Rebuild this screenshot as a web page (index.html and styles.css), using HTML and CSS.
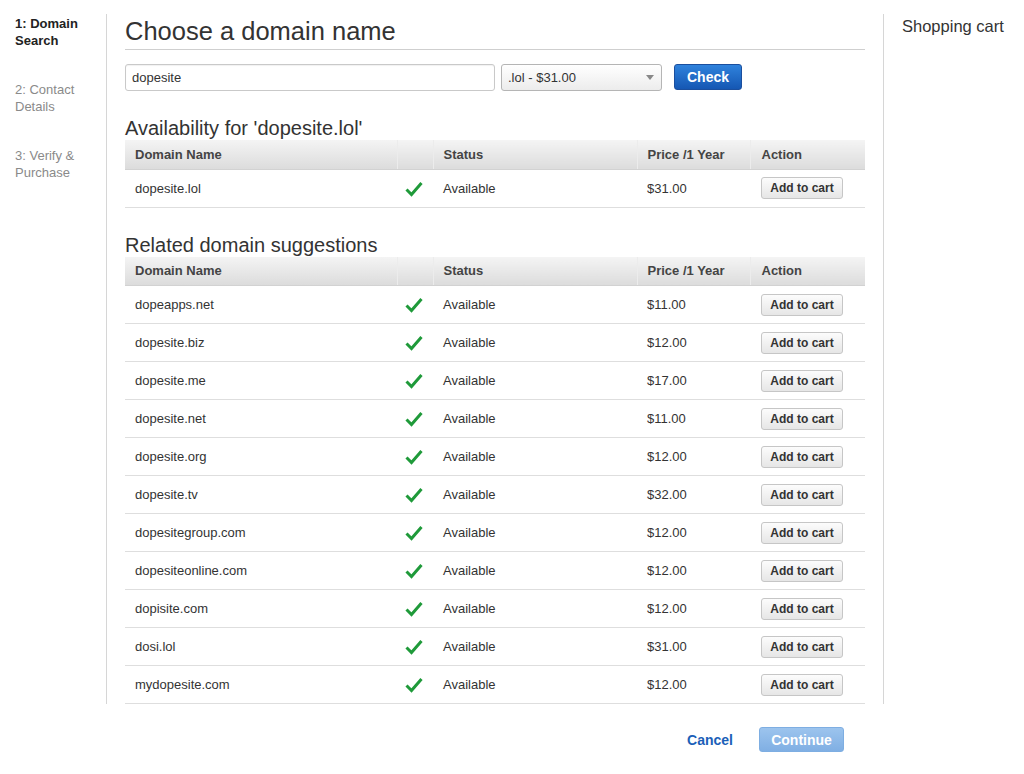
FILE: index.html
```html
<!DOCTYPE html>
<html>
<head>
<meta charset="utf-8">
<link rel="stylesheet" href="styles.css">
</head>
<body>
<div class="layout">
  <nav class="steps">
    <div class="step active">1: Domain Search</div>
    <div class="step">2: Contact Details</div>
    <div class="step">3: Verify &amp; Purchase</div>
  </nav>
  <main class="main">
    <h1 class="title">Choose a domain name</h1>
    <div class="search">
      <div class="input">dopesite</div>
      <div class="select"><span>.lol - $31.00</span><span class="caret"></span></div>
      <button class="btn-check">Check</button>
    </div>

    <h2 class="section">Availability for 'dopesite.lol'</h2>
    <table class="grid">
      <colgroup><col class="c1"><col class="c2"><col class="c3"><col class="c4"><col class="c5"></colgroup>
      <thead><tr><th>Domain Name</th><th></th><th>Status</th><th>Price /1 Year</th><th>Action</th></tr></thead>
      <tbody>
        <tr><td>dopesite.lol</td><td class="ok"><svg width="18" height="16" viewBox="0 0 18 16"><path d="M1.5 8.5 L6.5 13.5 L16.5 2" fill="none" stroke="#1f9a3a" stroke-width="3"/></svg></td><td>Available</td><td>$31.00</td><td class="act"><button class="add">Add to cart</button></td></tr>
      </tbody>
    </table>

    <h2 class="section">Related domain suggestions</h2>
    <table class="grid">
      <colgroup><col class="c1"><col class="c2"><col class="c3"><col class="c4"><col class="c5"></colgroup>
      <thead><tr><th>Domain Name</th><th></th><th>Status</th><th>Price /1 Year</th><th>Action</th></tr></thead>
      <tbody>
        <tr><td>dopeapps.net</td><td class="ok"><svg width="18" height="16" viewBox="0 0 18 16"><path d="M1.5 8.5 L6.5 13.5 L16.5 2" fill="none" stroke="#1f9a3a" stroke-width="3"/></svg></td><td>Available</td><td>$11.00</td><td class="act"><button class="add">Add to cart</button></td></tr>
        <tr><td>dopesite.biz</td><td class="ok"><svg width="18" height="16" viewBox="0 0 18 16"><path d="M1.5 8.5 L6.5 13.5 L16.5 2" fill="none" stroke="#1f9a3a" stroke-width="3"/></svg></td><td>Available</td><td>$12.00</td><td class="act"><button class="add">Add to cart</button></td></tr>
        <tr><td>dopesite.me</td><td class="ok"><svg width="18" height="16" viewBox="0 0 18 16"><path d="M1.5 8.5 L6.5 13.5 L16.5 2" fill="none" stroke="#1f9a3a" stroke-width="3"/></svg></td><td>Available</td><td>$17.00</td><td class="act"><button class="add">Add to cart</button></td></tr>
        <tr><td>dopesite.net</td><td class="ok"><svg width="18" height="16" viewBox="0 0 18 16"><path d="M1.5 8.5 L6.5 13.5 L16.5 2" fill="none" stroke="#1f9a3a" stroke-width="3"/></svg></td><td>Available</td><td>$11.00</td><td class="act"><button class="add">Add to cart</button></td></tr>
        <tr><td>dopesite.org</td><td class="ok"><svg width="18" height="16" viewBox="0 0 18 16"><path d="M1.5 8.5 L6.5 13.5 L16.5 2" fill="none" stroke="#1f9a3a" stroke-width="3"/></svg></td><td>Available</td><td>$12.00</td><td class="act"><button class="add">Add to cart</button></td></tr>
        <tr><td>dopesite.tv</td><td class="ok"><svg width="18" height="16" viewBox="0 0 18 16"><path d="M1.5 8.5 L6.5 13.5 L16.5 2" fill="none" stroke="#1f9a3a" stroke-width="3"/></svg></td><td>Available</td><td>$32.00</td><td class="act"><button class="add">Add to cart</button></td></tr>
        <tr><td>dopesitegroup.com</td><td class="ok"><svg width="18" height="16" viewBox="0 0 18 16"><path d="M1.5 8.5 L6.5 13.5 L16.5 2" fill="none" stroke="#1f9a3a" stroke-width="3"/></svg></td><td>Available</td><td>$12.00</td><td class="act"><button class="add">Add to cart</button></td></tr>
        <tr><td>dopesiteonline.com</td><td class="ok"><svg width="18" height="16" viewBox="0 0 18 16"><path d="M1.5 8.5 L6.5 13.5 L16.5 2" fill="none" stroke="#1f9a3a" stroke-width="3"/></svg></td><td>Available</td><td>$12.00</td><td class="act"><button class="add">Add to cart</button></td></tr>
        <tr><td>dopisite.com</td><td class="ok"><svg width="18" height="16" viewBox="0 0 18 16"><path d="M1.5 8.5 L6.5 13.5 L16.5 2" fill="none" stroke="#1f9a3a" stroke-width="3"/></svg></td><td>Available</td><td>$12.00</td><td class="act"><button class="add">Add to cart</button></td></tr>
        <tr><td>dosi.lol</td><td class="ok"><svg width="18" height="16" viewBox="0 0 18 16"><path d="M1.5 8.5 L6.5 13.5 L16.5 2" fill="none" stroke="#1f9a3a" stroke-width="3"/></svg></td><td>Available</td><td>$31.00</td><td class="act"><button class="add">Add to cart</button></td></tr>
        <tr><td>mydopesite.com</td><td class="ok"><svg width="18" height="16" viewBox="0 0 18 16"><path d="M1.5 8.5 L6.5 13.5 L16.5 2" fill="none" stroke="#1f9a3a" stroke-width="3"/></svg></td><td>Available</td><td>$12.00</td><td class="act"><button class="add">Add to cart</button></td></tr>
      </tbody>
    </table>
  </main>
  <aside class="cart">Shopping cart</aside>
</div>
<div class="footer">
  <a class="cancel">Cancel</a>
  <button class="btn-continue">Continue</button>
</div>
</body>
</html>
```

FILE: styles.css
```css
* { box-sizing: border-box; }
body {
  margin: 0;
  background: #fff;
  font-family: "Liberation Sans", Arial, Helvetica, sans-serif;
  color: #333;
  width: 1024px;
}
.layout {
  display: flex;
  align-items: stretch;
  margin-top: 14px;
}
.steps {
  width: 107px;
  border-right: 1px solid #d6d6d6;
  padding: 1px 0 0 15px;
  flex: none;
}
.step {
  font-size: 13px;
  line-height: 17px;
  color: #8a8a8a;
  width: 80px;
  margin-bottom: 32px;
}
.step.active { color: #222; font-weight: bold; }
.main {
  width: 776px;
  padding: 0 18px;
  flex: none;
}
.title {
  margin: 0;
  font-size: 25.5px;
  line-height: 30px;
  font-weight: normal;
  color: #333;
  padding: 2px 0 3px;
  border-bottom: 1px solid #cfcfcf;
}
.search {
  display: flex;
  align-items: flex-start;
  margin-top: 14px;
}
.input {
  width: 370px;
  height: 27px;
  border: 1px solid #c9c9c9;
  border-radius: 3px;
  padding: 0 6px;
  font-size: 13px;
  line-height: 25px;
  color: #333;
  box-shadow: inset 0 1px 1px rgba(0,0,0,0.06);
}
.select {
  margin-left: 6px;
  width: 161px;
  height: 27px;
  border: 1px solid #b5b5b5;
  border-radius: 3px;
  background: linear-gradient(#ffffff, #ececec);
  display: flex;
  justify-content: space-between;
  align-items: center;
  padding: 0 7px 0 6px;
  font-size: 13px;
  color: #333;
}
.caret {
  width: 0; height: 0;
  border-left: 4px solid transparent;
  border-right: 4px solid transparent;
  border-top: 5px solid #888;
}
.btn-check {
  margin-left: 12px;
  width: 68px;
  height: 26px;
  border: 1px solid #1b4f9e;
  border-radius: 3px;
  background: linear-gradient(#2f82dc, #1557b3);
  color: #fff;
  font-family: inherit;
  font-weight: bold;
  font-size: 14px;
  padding: 0;
}
.section {
  margin: 25px 0 0;
  font-size: 20px;
  line-height: 24px;
  font-weight: normal;
  color: #333;
}
.grid {
  width: 740px;
  border-collapse: collapse;
  table-layout: fixed;
}
.c1 { width: 272px; } .c2 { width: 36px; } .c3 { width: 204px; } .c4 { width: 113px; } .c5 { width: 115px; }
.grid th {
  height: 29px;
  padding: 0 10px;
  text-align: left;
  font-size: 13px;
  font-weight: bold;
  color: #444;
  background: linear-gradient(#f4f4f4, #dcdcdc);
  border-left: 1px solid #ececec;
  border-bottom: 1px solid #d2d2d2;
}
.grid th:first-child { border-left: none; }
.grid th:last-child { padding-left: 11px; }
.grid td {
  height: 38px;
  padding: 0 10px;
  font-size: 13px;
  color: #333;
  border-bottom: 1px solid #dedede;
  vertical-align: middle;
}
.grid td.ok { padding: 4px 0 0 8px; }
.grid td.act { padding-left: 11px; }
.add {
  width: 82px;
  height: 22px;
  border: 1px solid #c6c6c6;
  border-radius: 3px;
  background: linear-gradient(#fcfcfc, #e6e6e6);
  font-family: inherit;
  font-size: 12px;
  font-weight: bold;
  color: #333;
  padding: 0;
  display: block;
}
.cart {
  border-left: 1px solid #d6d6d6;
  padding: 2px 0 0 18px;
  font-size: 16.5px;
  line-height: 20px;
  color: #333;
  flex: 1;
}
.footer {
  width: 865px;
  display: flex;
  justify-content: flex-end;
  align-items: center;
  padding-right: 21px;
  margin-top: 23px;
}
.cancel {
  color: #1b5fb8;
  font-weight: bold;
  font-size: 14px;
  margin-right: 26px;
}
.btn-continue {
  width: 85px;
  height: 25px;
  border: 1px solid #7eaee2;
  border-radius: 3px;
  background: linear-gradient(#9cc4ee, #80afe3);
  color: #fff;
  font-family: inherit;
  font-weight: bold;
  font-size: 14px;
  padding: 0;
}
```
